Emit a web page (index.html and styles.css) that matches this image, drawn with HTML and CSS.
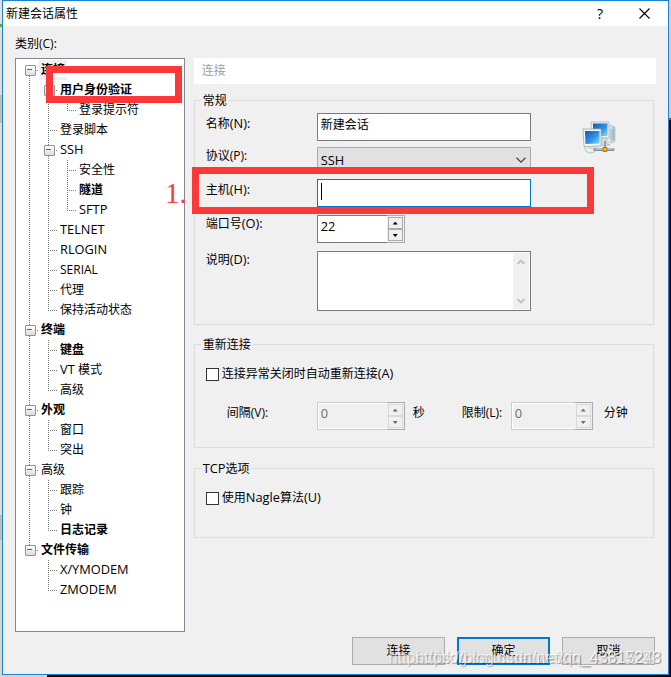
FILE: index.html
```html
<!DOCTYPE html>
<html lang="zh-CN">
<head>
<meta charset="utf-8">
<title>新建会话属性</title>
<link rel="stylesheet" href="styles.css">
</head>
<body>
<main class="dialog">
  <header class="titlebar">
    <h1>新建会话属性</h1>
    <span class="help">?</span>
    <svg class="close" width="11" height="11" viewBox="0 0 11 11"><path d="M.5.5l10 10M10.500.5l-10 10" stroke="#000" stroke-width="1.1" fill="none"/></svg>
  </header>
  <div class="content">
    <section class="side">
      <div class="caption">类别(C):</div>
      <ul class="tree">
        <li><div class="node open bold selected"><span>连接</span></div>
          <ul>
            <li><div class="node open bold"><span>用户身份验证</span></div>
              <ul><li><div class="node"><span>登录提示符</span></div></li></ul>
            </li>
            <li><div class="node"><span>登录脚本</span></div></li>
            <li><div class="node open latin"><span>SSH</span></div>
              <ul>
                <li><div class="node"><span>安全性</span></div></li>
                <li><div class="node bold"><span>隧道</span></div></li>
                <li><div class="node latin"><span>SFTP</span></div></li>
              </ul>
            </li>
            <li><div class="node latin"><span>TELNET</span></div></li>
            <li><div class="node latin"><span>RLOGIN</span></div></li>
            <li><div class="node"><span>SERIAL</span></div></li>
            <li><div class="node"><span>代理</span></div></li>
            <li><div class="node"><span>保持活动状态</span></div></li>
          </ul>
        </li>
        <li><div class="node open bold"><span>终端</span></div>
          <ul>
            <li><div class="node bold"><span>键盘</span></div></li>
            <li><div class="node"><span><em class="latin">VT </em>模式</span></div></li>
            <li><div class="node"><span>高级</span></div></li>
          </ul>
        </li>
        <li><div class="node open bold"><span>外观</span></div>
          <ul>
            <li><div class="node"><span>窗口</span></div></li>
            <li><div class="node"><span>突出</span></div></li>
          </ul>
        </li>
        <li><div class="node open"><span>高级</span></div>
          <ul>
            <li><div class="node"><span>跟踪</span></div></li>
            <li><div class="node"><span>钟</span></div></li>
            <li><div class="node bold"><span>日志记录</span></div></li>
          </ul>
        </li>
        <li><div class="node open bold"><span>文件传输</span></div>
          <ul>
            <li><div class="node latin"><span>X/YMODEM</span></div></li>
            <li><div class="node latin"><span>ZMODEM</span></div></li>
          </ul>
        </li>
      </ul>
    </section>
    <section class="page">
      <div class="page-title">连接</div>
      <section class="group general">
        <h2>常规</h2>
        <div class="fields">
          <div class="row name"><label>名称<em class="latin">(N):</em></label><div class="input">新建会话</div></div>
          <div class="row protocol"><label class="raised">协议(P):</label><div class="input select"><em class="latin">SSH</em><svg width="10" height="6" viewBox="0 0 10 6"><path d="M.5.8L5 5.200 9.500.8" fill="none" stroke="#444" stroke-width="1.200"/></svg></div></div>
          <div class="row host"><label>主机<em class="latin">(H):</em></label><div class="input focus"><i class="caret"></i></div></div>
          <div class="row port"><label class="raised">端口号<em class="latin">(O):</em></label><div class="spin"><span class="latin">22</span><div class="steps"><b class="up"></b><b class="down"></b></div></div></div>
          <div class="row"><label class="raised">说明<em class="latin">(D):</em></label><div class="input area"><div class="scroll">
            <svg width="8" height="6" viewBox="0 0 8 6"><path d="M.5 5L4 1.500 7.500 5" fill="none" stroke="#bfbfbf" stroke-width="1.800"/></svg>
            <svg width="8" height="6" viewBox="0 0 8 6"><path d="M.5 1L4 4.500 7.500 1" fill="none" stroke="#bfbfbf" stroke-width="1.800"/></svg>
          </div></div></div>
        </div>
        <svg class="network" width="34" height="34" viewBox="0 0 34 34">
          <defs><linearGradient id="screen" x1="0" y1="0" x2="1" y2="1"><stop offset="0" stop-color="#1458b8"/><stop offset=".55" stop-color="#3191e2"/><stop offset="1" stop-color="#83dcf8"/></linearGradient>
          <linearGradient id="tower"><stop offset="0" stop-color="#f4f8fa"/><stop offset="1" stop-color="#a9bdc8"/></linearGradient></defs>
          <path d="M25 5l4-1 4 2v14l-3 2-5-1z" fill="url(#tower)" stroke="#b2c2cc" stroke-width=".7"/>
          <path d="M29 8v11M31 8v10" stroke="#8fa9b8" stroke-width=".7"/>
          <path d="M9 1h18v16H10z" fill="#edf2f3" stroke="#a8b6bd" stroke-width=".8"/>
          <path d="M11 2.500h14.500v12.500H11z" fill="url(#screen)"/>
          <path d="M20 17h4v5l4 2-8 1z" fill="#d9e2e6" stroke="#a0afb7" stroke-width=".6"/>
          <path d="M1 8h18v17l-17 .5z" fill="#f4f6f5" stroke="#9babb3" stroke-width=".8"/>
          <path d="M3 10h14.500v12.500L3.500 23z" fill="url(#screen)"/>
          <path d="M3 26c0 8 11 8 11 0" fill="#e9eff2" stroke="#a9b6bd"/>
          <path d="M6 26h6v2H6z" fill="#cfdbe0"/>
          <path d="M13 28.500h18" stroke="#79919f" stroke-width="3" stroke-linecap="round"/>
          <path d="M13 28h18" stroke="#dce7ec"/>
          <path d="M23 20v6" stroke="#768c98" stroke-width="1.500"/>
          <path d="M21 26.500h4v4h-4z" fill="#ffad0b" stroke="#d96a00"/>
        </svg>
      </section>
      <section class="group reconnect">
        <h2>重新连接</h2>
        <div class="check"><i></i>连接异常关闭时自动重新连接<em class="latin">(A)</em></div>
        <div class="timing">
          <label class="interval">间隔(V):</label>
          <div class="spin disabled"><span class="latin">0</span><div class="steps"><b class="up"></b><b class="down"></b></div></div>
          <label class="seconds">秒</label>
          <label class="limit">限制(L):</label>
          <div class="spin disabled short"><span class="latin">0</span><div class="steps"><b class="up"></b><b class="down"></b></div></div>
          <label class="minutes">分钟</label>
        </div>
      </section>
      <section class="group tcp">
        <h2><em class="latin">TCP</em>选项</h2>
        <div class="check"><i></i>使用<em class="latin">Nagle</em>算法<em class="latin">(U)</em></div>
      </section>
    </section>
  </div>
  <footer class="actions">
    <button>连接</button><button class="default">确定</button><button>取消</button>
  </footer>
</main>
<div class="mark mark-auth"></div>
<div class="mark mark-host"></div>
<div class="step">1.</div>
<div class="watermark">https://blog.csdn.net/weixin_43817273</div>
<div class="watermark">https://blog.csdn.net/qq_43315248</div>
</body>
</html>
```
FILE: styles.css
```css
* { box-sizing: border-box; }
body {
  margin: 0;
  width: 671px;
  height: 677px;
  overflow: hidden;
  position: relative;
  padding-left: 2px;
  font: 12px/20px "Open Sans", "Noto Sans CJK SC", sans-serif;
  color: #000;
  background:
    linear-gradient(#d0d0d0 0 118px, #0078d7 118px 120px, #000 120px) 669px 0 / 2px 677px no-repeat,
    linear-gradient(#000, #000) 47px 675px / 624px 2px no-repeat,
    linear-gradient(#e0e0e0 0 24px, #58a65a 24px 27px, #dedede 27px 95px, #bdbdbd 95px 123px, #dedede 123px 515px, #bdbdbd 515px 540px, #d5d5d5 540px) 0 0 / 47px 677px no-repeat;
}
h1, h2, ul { margin: 0; padding: 0; font: inherit; list-style: none; }
em { font-style: normal; white-space: pre; }
.latin { font-size: 12.8px; }
em.latin { line-height: 0; }
.dialog {
  width: 667px;
  height: 675px;
  border: 1px solid #1883d7;
  background: #f0f0f0;
}
.titlebar {
  height: 25px;
  display: flex;
  align-items: center;
  background: #fff;
  padding: 0 18px 0 3px;
}
.titlebar h1 { flex: 1; }
.help { font-size: 14px; width: 8px; margin-right: 35px; text-align: center; }
.close { display: block; }

.content { display: flex; gap: 9px; padding: 7px 12px 0; height: 606px; }
.side { width: 170px; }
.caption { height: 25px; padding-top: 1px; }
.tree { height: 574px; border: 1px solid #828790; background: #fff; padding: 1px 0 0 9px; }
.tree li {
  background:
    repeating-linear-gradient(#777 0 1px, transparent 1px 2px) 4px 0 / 1px 100% no-repeat,
    repeating-linear-gradient(90deg, #777 0 1px, transparent 1px 2px) 4px 10px / 9px 1px no-repeat;
}
.tree li:last-child { background-size: 1px 10px, 9px 1px; }
.tree > li:first-child { background-position: 4px 10px, 4px 10px; }
.tree ul { padding-left: 19px; }
.node { height: 20px; padding-left: 14px; display: flex; align-items: center; white-space: nowrap; }
.node span { padding: 0 2px; }
.node.latin span { height: 20px; line-height: 18px; }
.node.open { padding-left: 0; }
.node.open::before {
  content: "";
  width: 9px;
  height: 9px;
  margin: 1px 5px 0 0;
  border: 1px solid #919191;
  border-radius: 1px;
  background:
    linear-gradient(#4b63a7, #4b63a7) 1px 3px / 5px 1px no-repeat,
    linear-gradient(#fff, #dcdcdc);
}
.node.open span { margin-left: -2px; }
.bold { font-weight: 700; }
.selected span { background: #f0f0f0; }

.page { width: 463px; padding-top: 25px; }
.page-title { height: 26px; line-height: 25px; padding-left: 8px; background: #fff; color: #a0a0a0; }
.group { width: 460px; border: 1px solid #dcdcdc; }
.group h2 { width: max-content; height: 20px; margin: -10px 0 0 6px; padding: 0 2px; background: #f0f0f0; }
.general { height: 225px; margin-top: 16px; display: grid; grid-template-columns: 336px 1fr; grid-template-rows: 10px 1fr; }
.general h2 { grid-column: 1 / 3; }
.fields { padding: 2px 0 0 11px; }
.row { display: flex; }
.row label { width: 111px; padding-top: 1px; }
.row .raised { margin-top: -2px; }
.input { width: 214px; height: 28px; border: 1px solid #7a7a7a; background: #fff; padding: 1px 3px; }
.name { height: 34px; }
.protocol { height: 32px; }
.host, .port { height: 36px; }
.select { height: 26px; display: flex; justify-content: space-between; align-items: center; border-color: #adadad; background: #e1e1e1; padding-right: 4px; }
.focus { border-color: #0078d7; padding: 3px; }
.caret { display: block; width: 1px; height: 17px; background: #000; }
.area { height: 60px; display: flex; justify-content: flex-end; padding: 1px; }
.scroll { width: 16px; background: #f0f0f0; display: flex; flex-direction: column; justify-content: space-between; align-items: center; padding: 6px 0 5px; }
.spin { width: 88px; height: 28px; border: 1px solid #7a7a7a; background: #fff; display: flex; justify-content: space-between; padding-left: 3px; }
.steps { width: 18px; height: 28px; margin: -1px -1px 0 0; border: solid #ababb0; border-width: 1px 1px 1px 0; padding: 1px; background: #f0f0f0; display: grid; grid-template-rows: 12px 12px; }
.steps b { width: 15px; border: 1px solid #acacac; display: flex; align-items: center; justify-content: center; }
.steps b::before { content: ""; width: 5px; height: 3px; background: #000; clip-path: polygon(50% 0, 100% 100%, 0 100%); }
.steps .down::before { transform: scaleY(-1); }
.network { margin: 10px 0 0 51px; }

.reconnect { height: 104px; margin-top: 19px; }
.check { display: flex; align-items: center; height: 20px; padding-left: 11px; }
.check i { width: 13px; height: 13px; border: 1px solid #333; background: #fff; margin-right: 3px; }
.check em.latin { line-height: 18px; height: 20px; }
.reconnect .check { margin-top: 9px; }
.timing { display: flex; margin-top: 18px; padding-left: 32px; }
.timing label { padding-top: 1px; }
.interval { width: 90px; }
.timing .seconds { width: 49px; padding-left: 8px; }
.timing .limit { width: 57px; padding-left: 8px; }
.timing .minutes { padding-left: 11px; }
.short { width: 82px; }
.disabled { background: #f0f0f0; border-color: #ccc; color: #6d6d6d; box-shadow: inset 0 0 0 1px #fff; }
.disabled .steps b { border-color: #d9d9d9; }
.disabled .steps b::before { background: #6d6d6d; }
.tcp { height: 70px; margin-top: 20px; }
.tcp .check { margin-top: 9px; }

.actions { display: flex; justify-content: flex-end; gap: 12px; padding: 5px 13px 0 0; }
button { width: 93px; height: 28px; padding: 0; border: 1px solid #adadad; background: #e1e1e1; font: inherit; color: #000; }
.default { border: 2px solid #0078d7; }

.mark { position: absolute; border: 7px solid #fd3838; }
.mark-auth { left: 46px; top: 66px; width: 136px; height: 37px; background: linear-gradient(#fff, #fff) 0 0 / 100% 4px no-repeat; }
.mark-host { left: 192px; top: 167px; width: 402px; height: 47px; }
.step { position: absolute; left: 165px; top: 178px; font: 29px/30px "Liberation Serif", serif; color: #fd3838; }
.watermark { position: absolute; top: 648px; right: 10px; font: 16px/20px "Liberation Sans", sans-serif; color: rgba(255, 255, 255, .65); text-shadow: 1px 1px 1px rgba(0, 0, 0, .25); white-space: nowrap; }
```
